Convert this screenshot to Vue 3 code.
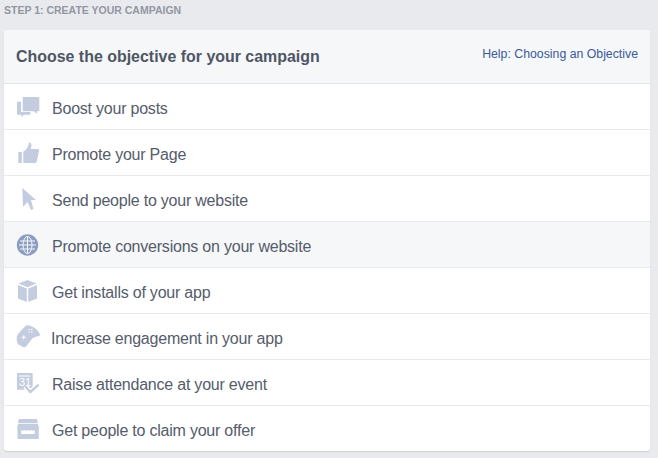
<script setup>
const rows = [
  { label: 'Boost your posts', icon: 'posts' },
  { label: 'Promote your Page', icon: 'like' },
  { label: 'Send people to your website', icon: 'cursor' },
  { label: 'Promote conversions on your website', icon: 'globe', active: true },
  { label: 'Get installs of your app', icon: 'box' },
  { label: 'Increase engagement in your app', icon: 'game', shift: true },
  { label: 'Raise attendance at your event', icon: 'event' },
  { label: 'Get people to claim your offer', icon: 'shop' },
]
</script>

<template>
  <div class="page">
    <div class="step">STEP 1: CREATE YOUR CAMPAIGN</div>
    <section class="card">
      <header class="head">
        <h2 class="title">Choose the objective for your campaign</h2>
        <a class="help">Help: Choosing an Objective</a>
      </header>
      <ul class="list">
        <li v-for="r in rows" :key="r.label" class="row" :class="{ active: r.active }">
          <svg class="icon" :class="{ on: r.active }" width="24" height="24" viewBox="0 0 24 24">
            <template v-if="r.icon === 'posts'">
              <path d="M6.700 2H23.300V16.300H21V18.700L17.700 16.300H6.700z" />
              <path d="M1 6.700h4V17h9.300v2.700H8L5.300 22v-2.300H1z" />
            </template>
            <template v-else-if="r.icon === 'like'">
              <rect x="2.300" y="11" width="3.500" height="11" />
              <path d="M7.300 10.500c2.500-1.500 4.800-3.500 5.700-9 2.500-.5 3.200 3 1.700 6.500H22c1 0 1.300 1 1 2l-2.200 10.500c-.3 1-1 1.500-2 1.500H7.300z" />
            </template>
            <path v-else-if="r.icon === 'cursor'" d="M6.300 1L20 13h-5l2.500 9-2.500 1-3.500-8L7 20z" />
            <template v-else-if="r.icon === 'globe'">
              <circle cx="11.500" cy="12" r="10.700" />
              <g class="lines">
                <ellipse cx="11.500" cy="12" rx="4.500" ry="8.500" />
                <path d="M11.500 3.500v17M4 8h15M3 12h17M4 16h15" />
              </g>
            </template>
            <template v-else-if="r.icon === 'box'">
              <path d="M11.500 1l9 3.500-9 3.700-9-3.700z" />
              <path d="M2 6l8.800 3.600V23L2 19.500z" />
              <path d="M21 6l-8.800 3.600V23l8.800-3.500z" />
            </template>
            <template v-else-if="r.icon === 'game'">
              <path d="M.7 12.500C1 9 5 6 8.700 1.700 10 .2 12.500-.2 15 1c4 1.500 8 5 9 8.500.2 1.500-1.500 1.500-4 2.200-2 .5-3.500 1-4.500 2.800L12 19c-1 2-2.500 3.500-4.300 3.300-2-.3-3.200-2-5-2.500C1.200 19 .5 15.500.7 12.500z" />
              <g class="lines thin">
                <path d="M5.700 12.300h4M7.700 10.300v4" />
                <path d="M12.500 4.500h1.500M15 4.500h1.500M12.500 7h1.500M15 7h1.500" />
              </g>
            </template>
            <template v-else-if="r.icon === 'event'">
              <path d="M1 2h15.700v16.700H1z" />
              <path class="lines thin" d="M2.700 5h11.600" />
              <text x="3" y="15.300" class="num">31</text>
              <path class="halo" d="M9.300 15.300l5 5.700 8.400-7.300" />
              <path class="check" d="M9.300 15.300l5 5.700 8.400-7.300" />
            </template>
            <template v-else>
              <path d="M2.700 2H21l.8 4.300H2z" />
              <path d="M2 7h20l1.300 5H1z" />
              <path d="M1.500 12h21.300v10H1.500z" />
              <path class="lines fill" d="M5.300 13q1.700 1.300 3.400 0 1.700 1.300 3.300 0 1.700 1.300 3.300 0 1.700 1.300 3.400 0V17H5.300z" />
            </template>
          </svg>
          <span class="label" :class="{ shift: r.shift }">{{ r.label }}</span>
        </li>
      </ul>
    </section>
  </div>
</template>

<style>
html, body { margin: 0; background: #e9eaed; }
</style>

<style scoped>
.page {
  width: 658px;
  height: 458px;
  overflow: hidden;
  background: #e9eaed;
  box-sizing: border-box;
  padding: 0 8px 0 4px;
  font-family: "Liberation Sans", Arial, sans-serif;
}
.step {
  height: 30px;
  padding-top: 3px;
  box-sizing: border-box;
  font-size: 10.5px;
  line-height: 14px;
  font-weight: bold;
  color: #9197a3;
}
.card {
  background: #fff;
  border-radius: 3px;
  height: 421px;
  box-shadow: 0 1px 1px rgba(0, 0, 0, 0.12);
  overflow: hidden;
}
.head {
  height: 54px;
  box-sizing: border-box;
  background: #f6f7f8;
  display: flex;
  align-items: center;
  justify-content: space-between;
  padding: 0 12px;
  border-bottom: 1px solid #e2e3e6;
}
.title {
  margin: 0;
  font-size: 15.95px;
  font-weight: bold;
  color: #4e5665;
}
.help {
  font-size: 12.3px;
  color: #3b5998;
  padding-bottom: 5px;
}
.list {
  list-style: none;
  margin: 0;
  padding: 0;
}
.row {
  height: 46px;
  box-sizing: border-box;
  display: flex;
  align-items: center;
  padding-left: 12px;
  border-bottom: 1px solid #e9eaed;
  font-size: 16px;
  letter-spacing: -0.22px;
  color: #555c6b;
}
.row:last-child { border-bottom: 0; height: 45px; }
.row.active { background: #f6f7f8; }
.icon {
  flex: none;
  width: 24px;
  height: 24px;
  margin-right: 12px;
  fill: #c4cde0;
  overflow: visible;
}
.icon.on { fill: #8b9dc3; }
.lines {
  fill: none;
  stroke: #f6f7f8;
  stroke-width: 1;
}
.lines.thin { stroke: #fff; }
.lines.fill { fill: #fff; stroke: none; }
.num {
  font-family: "Liberation Sans", sans-serif;
  font-size: 11px;
  fill: #fff;
}
.check {
  fill: none;
  stroke: #c4cde0;
  stroke-width: 2.4;
}
.halo {
  fill: none;
  stroke: #fff;
  stroke-width: 5;
}
.label { padding-top: 5px; }
.label.shift { margin-left: -1px; }
</style>
